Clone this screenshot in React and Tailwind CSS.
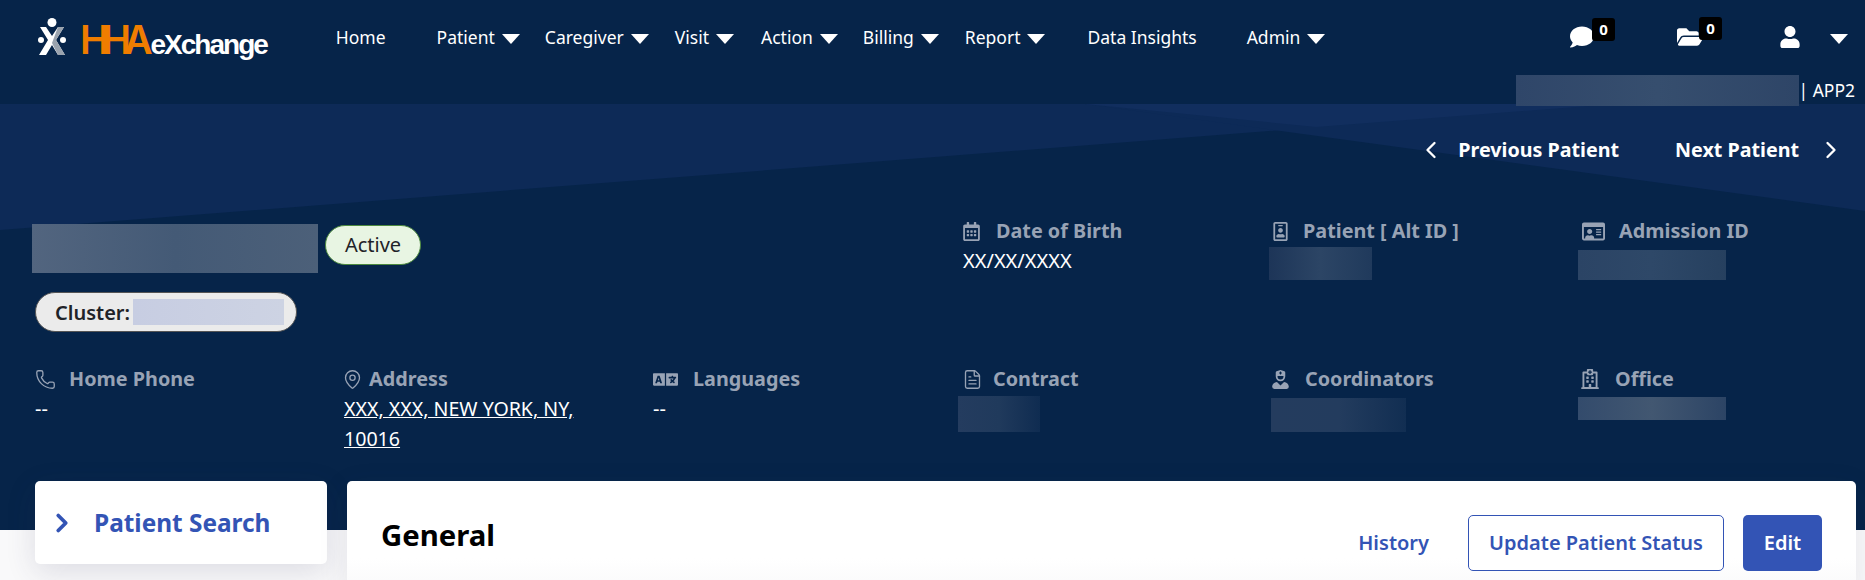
import React from "react";
import { Phone, MapPin, FileText, ChevronLeft, ChevronRight } from "lucide-react";
import { FaComment, FaFolderOpen, FaUser, FaLanguage, FaRegCalendarAlt, FaRegIdBadge, FaRegIdCard, FaUserNurse, FaRegHospital } from "react-icons/fa";

function Caret({ className = "" }) {
  return (
    <svg width="18" height="10" viewBox="0 0 18 10" className={className}>
      <polygon points="0,0 18,0 9,10" fill="#fff" />
    </svg>
  );
}

function Logo() {
  return (
    <div className="flex items-end h-[40px]">
      <svg width="30" height="38" viewBox="0 0 30 38" className="mb-[2px]">
        <circle cx="14" cy="4.5" r="4.5" fill="#fff" />
        <polygon points="2,9 8,9 14,18 20,9 26,9 18,22 27,37 20,37 14,27 8,37 1,37 10,22" fill="#fff" />
        <polygon points="20,9 26,9 18,22 27,37 20,37 14,25" fill="#9aa3ae" />
        <circle cx="3" cy="22" r="3" fill="#fff" />
        <circle cx="25" cy="22" r="3" fill="#fff" />
      </svg>
      <span className="ml-[12px] text-[39px] leading-[36px] font-semibold tracking-[-7px] text-[#ef7d00] font-['Inter',sans-serif]">HHA</span>
      <span className="ml-[5px] text-[28px] leading-[26px] font-bold tracking-[-2px] text-white font-['Liberation_Sans',sans-serif]">eXchange</span>
    </div>
  );
}

const navItems = [
  ["Home", false, "ml-[69px]"],
  ["Patient", true, "ml-[51px]"],
  ["Caregiver", true, "ml-[25px]"],
  ["Visit", true, "ml-[26px]"],
  ["Action", true, "ml-[27px]"],
  ["Billing", true, "ml-[25px]"],
  ["Report", true, "ml-[26px]"],
  ["Data Insights", false, "ml-[42px]"],
  ["Admin", true, "ml-[50px]"],
];

function Badge({ children }) {
  return (
    <span className="absolute left-[22px] -top-[8px] flex h-[23px] w-[23px] items-center justify-center rounded-[3px] bg-black text-[15px] font-bold text-white">
      {children}
    </span>
  );
}

function Label({ icon, children, gap = "ml-[12px]" }) {
  return (
    <div className="flex h-[30px] items-center text-[19.8px] font-bold text-[#98a3b5]">
      {icon}
      <span className={gap}>{children}</span>
    </div>
  );
}

const ic = "text-[#98a3b5] shrink-0";

export default function App() {
  return (
    <div className="h-screen overflow-hidden bg-[#f9f9fa] font-['Noto_Sans',sans-serif]">
      <header className="relative h-[530px] bg-[#062449] text-white">
        <svg className="absolute left-0 top-0 h-[530px] w-[1865px]" viewBox="0 0 1865 530">
          <polygon points="0,104 1615,104 0,230" fill="#0d2a57" />
          <polygon points="1085,104 1865,104 1865,211" fill="#0d2a57" />
          <polygon points="1085,104 1615,104 1316,127" fill="#112e5e" />
        </svg>

        <div className="relative">
          <nav className="flex h-[75px] items-center pl-[38px]">
            <Logo />
            <ul className="flex items-center text-[17.5px]">
              {navItems.map(([t, c, m]) => (
                <li key={t} className={`flex items-center ${m}`}>
                  {t}
                  {c && <Caret className="ml-[7px] mt-[3px]" />}
                </li>
              ))}
            </ul>
            <div className="ml-auto flex items-center pr-[17px]">
              <span className="relative">
                <FaComment className="text-[24px] -mt-[1px]" />
                <Badge>0</Badge>
              </span>
              <span className="relative ml-[83px]">
                <FaFolderOpen className="text-[26px] -mt-[1px]" />
                <Badge>0</Badge>
              </span>
              <FaUser className="ml-[76px] -mt-[2px] text-[22px]" />
              <Caret className="ml-[29px] mt-[3px]" />
            </div>
          </nav>

          <div className="flex h-[31px] items-center justify-end pr-[10px] text-[17.5px]">
            <div className="h-[31px] w-[283px] bg-linear-to-r from-[#2f4669] via-[#364e6e] to-[#2e4567]" />
            <span className="-ml-[1px]">| APP2</span>
          </div>

          <div className="flex h-[110px] items-start justify-end pr-[20px] pt-[30px] text-[19.7px] font-bold leading-[28px]">
            <ChevronLeft size={28} strokeWidth={2} />
            <span className="ml-[13px]">Previous Patient</span>
            <span className="ml-[56px]">Next Patient</span>
            <ChevronRight size={28} strokeWidth={2} className="ml-[18px]" />
          </div>

          <div className="grid grid-cols-[repeat(6,309px)] grid-rows-[148px_auto] pl-[35px]">
            <div className="col-span-3 pt-[8px]">
              <div className="flex items-start">
                <div className="-ml-[3px] h-[49px] w-[286px] bg-linear-to-r from-[#52657f] via-[#445a76] to-[#4c6079]" />
                <span className="ml-[7px] mt-[1px] flex h-[40px] w-[96px] items-center justify-center rounded-[20px] border border-[#4d8a3f] bg-[#e8f5e3] text-[20px] text-[#1f2328]">Active</span>
              </div>
              <div className="mt-[19px] flex h-[40px] w-[262px] items-center rounded-[20px] border border-[#555] bg-[#ebebeb] pl-[19px] text-[20px] font-semibold text-[#1f2328]">
                <span className="mt-[1px]">Cluster:</span>
                <div className="ml-[3px] h-[26px] w-[151px] bg-linear-to-r from-[#c7cde2] to-[#cdd3e3]" />
              </div>
            </div>
            <div>
              <Label icon={<FaRegCalendarAlt className={`${ic} text-[19px]`} />} gap="ml-[15px]">Date of Birth</Label>
              <div className="ml-[1px] text-[20px] leading-[30px]">XX/XX/XXXX</div>
            </div>
            <div>
              <Label icon={<FaRegIdBadge className={`${ic} text-[19px]`} />} gap="ml-[13px]">Patient [ Alt ID ]</Label>
              <div className="mt-[1px] -ml-[2px] h-[33px] w-[103px] bg-linear-to-r from-[#1d3558] via-[#2c4565] to-[#203a5c]" />
            </div>
            <div>
              <Label icon={<FaRegIdCard className={`${ic} ml-[2px] text-[23px]`} />} gap="ml-[14px]">Admission ID</Label>
              <div className="mt-[4px] -ml-[2px] h-[30px] w-[148px] bg-linear-to-r from-[#2b4465] via-[#2e4868] to-[#26405f]" />
            </div>

            <div>
              <Label icon={<Phone size={21} strokeWidth={1.5} className={ic} />} gap="ml-[13px]">Home Phone</Label>
              <div className="text-[20px] leading-[30px]">--</div>
            </div>
            <div>
              <Label icon={<MapPin size={21} strokeWidth={1.5} className={`${ic} -ml-[2px]`} />} gap="ml-[6px]">Address</Label>
              <a className="block w-[240px] text-[19.6px] leading-[30px] underline">XXX, XXX, NEW YORK, NY, 10016</a>
            </div>
            <div>
              <Label icon={<FaLanguage className={`${ic} text-[25px]`} />} gap="ml-[15px]">Languages</Label>
              <div className="text-[20px] leading-[30px]">--</div>
            </div>
            <div>
              <Label icon={<FileText size={21} strokeWidth={1.5} className={ic} />} gap="ml-[10px]">Contract</Label>
              <div className="mt-[2px] -ml-[4px] h-[36px] w-[82px] bg-linear-to-r from-[#243c5f] via-[#203a5c] to-[#0f2c51]" />
            </div>
            <div>
              <Label icon={<FaUserNurse className={`${ic} text-[19px]`} />} gap="ml-[15px]">Coordinators</Label>
              <div className="mt-[4px] h-[34px] w-[135px] bg-linear-to-r from-[#243c5e] via-[#233c5e] to-[#112e52]" />
            </div>
            <div>
              <Label icon={<FaRegHospital className={`${ic} text-[20px]`} />} gap="ml-[15px]">Office</Label>
              <div className="mt-[3px] -ml-[2px] h-[23px] w-[148px] bg-linear-to-r from-[#334b6c] via-[#425771] to-[#2c4465]" />
            </div>
          </div>
        </div>
      </header>

      <main className="-mt-[49px] relative flex items-start pl-[35px] pr-[9px] gap-[20px]">
        <aside className="flex h-[83px] w-[292px] items-center rounded-[5px] bg-white pl-[20px] shadow-[0_8px_30px_rgba(50,50,90,0.14)]">
          <ChevronRight size={30} strokeWidth={3} className="text-[#3354b5] -ml-[8px]" />
          <span className="ml-[17px] mt-[1px] text-[24.4px] font-bold text-[#3354b5]">Patient Search</span>
        </aside>
        <section className="flex h-[110px] flex-1 items-start justify-between rounded-[5px] bg-linear-to-b from-white from-70% to-[#f9f9fa] px-[34px] pt-[34px] shadow-[0_8px_30px_rgba(50,50,90,0.10)]">
          <h1 className="text-[29.3px] font-bold leading-[40px] text-black">General</h1>
          <div className="flex items-center">
            <span className="text-[20px] font-semibold text-[#3354b5]">History</span>
            <button className="ml-[39px] h-[56px] w-[256px] rounded-[5px] border border-[#3354b5] bg-white text-[20px] font-semibold text-[#3354b5]">Update Patient Status</button>
            <button className="ml-[19px] h-[56px] w-[79px] rounded-[5px] bg-[#3354b5] text-[20px] font-semibold text-white">Edit</button>
          </div>
        </section>
      </main>
    </div>
  );
}
